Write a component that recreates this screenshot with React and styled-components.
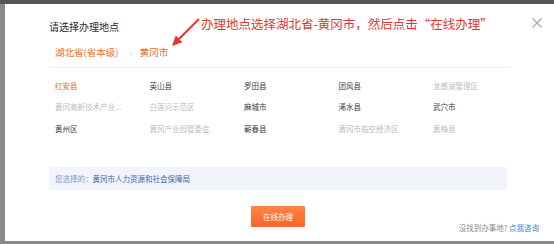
import React from "react"
import styled, { createGlobalStyle } from "styled-components"

const GlobalStyle = createGlobalStyle`
  html, body {
    margin: 0;
    padding: 0;
    background: #858585;
    font-family: "Noto Sans CJK SC", "Noto Sans", sans-serif;
  }
`

const regions = [
  { name: "红安县", state: "active" },
  { name: "英山县" },
  { name: "罗田县" },
  { name: "团风县" },
  { name: "龙感湖管理区", state: "disabled" },
  { name: "黄冈高新技术产业...", state: "disabled" },
  { name: "白莲河示范区", state: "disabled" },
  { name: "麻城市" },
  { name: "浠水县" },
  { name: "武穴市" },
  { name: "黄州区" },
  { name: "黄冈产业园管委会", state: "disabled" },
  { name: "蕲春县" },
  { name: "黄冈市临空经济区", state: "disabled" },
  { name: "黄梅县", state: "disabled" },
]

const App = () => (
  <>
    <GlobalStyle />
    <Backdrop>
      <Modal>
        <Title>请选择办理地点</Title>
        <CloseButton aria-label="关闭">
          <svg width="10" height="10" viewBox="0 0 10 10">
            <path d="M0.5 0.5 L9.5 9.5 M9.5 0.5 L0.5 9.5" stroke="#a8a8a8" strokeWidth="1.2" fill="none" />
          </svg>
        </CloseButton>

        <Breadcrumb>
          <Crumb>湖北省(省本级)</Crumb>
          <Separator>›</Separator>
          <Crumb>黄冈市</Crumb>
        </Breadcrumb>

        <Divider />

        <RegionGrid>
          {regions.map(r => (
            <RegionItem key={r.name} $state={r.state}>
              {r.name}
            </RegionItem>
          ))}
        </RegionGrid>

        <SelectedBar>
          <SelectedLabel>您选择的：</SelectedLabel>
          黄冈市人力资源和社会保障局
        </SelectedBar>

        <Footer>
          <span />
          <SubmitButton>在线办理</SubmitButton>
          <Hint>
            没找到办事地? <HintLink>点我咨询</HintLink>
          </Hint>
        </Footer>

        <Annotation>办理地点选择湖北省-黄冈市，然后点击“在线办理”</Annotation>
        <Arrow width="40" height="40" viewBox="0 0 40 40">
          <line x1="34" y1="5" x2="14" y2="25" stroke="#e8332d" strokeWidth="2" />
          <polygon points="7,32 17.4,28.2 10.8,21.6" fill="#e8332d" />
        </Arrow>
      </Modal>
    </Backdrop>
  </>
)

export default App

const Backdrop = styled.div`
  width: 554px;
  height: 244px;
  padding: 4px 0 0 5px;
  box-sizing: border-box;
  background: linear-gradient(#555 0, #555 4px, #8a8a8a 4px);
  overflow: hidden;
`

const Modal = styled.div`
  position: relative;
  width: 549px;
  height: 237px;
  box-sizing: border-box;
  padding: 16px 44px 0 45px;
  background: #fff;
`

const Title = styled.h3`
  margin: 0 0 0 -1px;
  font-size: 10px;
  line-height: 14px;
  font-weight: 400;
  color: #2b2b2b;
`

const CloseButton = styled.button`
  position: absolute;
  top: 14px;
  right: 12px;
  width: 10px;
  height: 10px;
  padding: 0;
  border: none;
  background: none;
  display: flex;
`

const Breadcrumb = styled.div`
  display: flex;
  align-items: center;
  margin-top: 11px;
  padding-left: 5px;
  height: 14px;
`

const Crumb = styled.span`
  font-size: 9.5px;
  line-height: 14px;
  color: #f26a22;
`

const Separator = styled.span`
  margin: 0 8px 0 11px;
  font-size: 8px;
  color: #c0c0c0;
`

const Divider = styled.div`
  margin-top: 8px;
  border-top: 1px solid #ececec;
`

const RegionGrid = styled.div`
  display: grid;
  grid-template-columns: repeat(5, 94.5px);
  grid-auto-rows: 21.5px;
  align-items: center;
  padding: 7px 0 0 5px;
`

const RegionItem = styled.span`
  font-size: 7.5px;
  line-height: 10px;
  white-space: nowrap;
  color: ${p =>
    p.$state === "active" ? "#f0622b" : p.$state === "disabled" ? "#bcbcbc" : "#3c3c3c"};
`

const SelectedBar = styled.div`
  margin: 27px 3px 0 -1px;
  height: 23px;
  display: flex;
  align-items: center;
  padding-left: 6px;
  background: #f1f5fb;
  font-size: 7.5px;
  color: #3b68a8;
`

const SelectedLabel = styled.span`
  color: #7d9bc8;
`

const Footer = styled.div`
  display: grid;
  grid-template-columns: 1fr auto 1fr;
  align-items: start;
  margin: 16px -44px 0 -45px;
  padding: 0 15px 0 12px;
`

const SubmitButton = styled.button`
  width: 54px;
  height: 21px;
  padding: 0;
  border: none;
  border-radius: 1px;
  background: linear-gradient(#ff8448, #fa6628);
  color: #fff;
  font-family: inherit;
  font-size: 7.5px;
`

const Hint = styled.div`
  justify-self: end;
  padding-top: 16px;
  font-size: 7.5px;
  line-height: 12px;
  color: #8c8c8c;
  white-space: nowrap;
`

const HintLink = styled.span`
  color: #3f7fd0;
`

const Annotation = styled.div`
  position: absolute;
  left: 196px;
  top: 12px;
  font-size: 12.5px;
  line-height: 16px;
  color: #e8332d;
  white-space: nowrap;
`

const Arrow = styled.svg`
  position: absolute;
  left: 160px;
  top: 10px;
`
